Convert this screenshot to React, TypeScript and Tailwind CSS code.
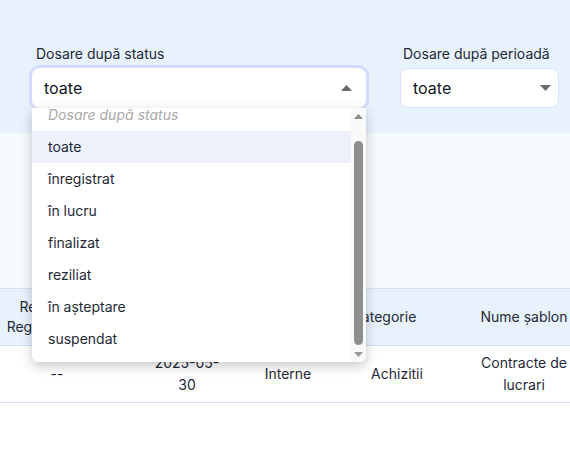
import React from "react";

const options = ["toate", "înregistrat", "în lucru", "finalizat", "reziliat", "în așteptare", "suspendat"];

function Caret({ up, className }: { up?: boolean; className?: string }) {
  return (
    <svg width="11" height="6" viewBox="0 0 11 6" className={className}>
      <path d={up ? "M0 6 L5.5 0 L11 6 Z" : "M0 0 L11 0 L5.5 6 Z"} />
    </svg>
  );
}

function StatusDropdown() {
  return (
    <div className="absolute left-0 top-full z-10 flex h-[254px] w-[334px] overflow-hidden rounded-b-md bg-white shadow-[0_4px_12px_rgba(0,0,0,0.22)]">
      <ul className="-mt-[9px] flex-1">
        <li className="flex h-8 items-center pl-4 text-sm italic text-[#a9a9a9]">Dosare după status</li>
        {options.map((o, i) => (
          <li
            key={o}
            className={`flex h-8 items-center pl-4 text-sm text-[#1f2937] ${i === 0 ? "bg-[#eef1fc]" : ""}`}
          >
            {o}
          </li>
        ))}
      </ul>
      <div className="flex w-[15px] flex-col bg-[#fafafa]">
        <div className="flex h-[15px] items-center justify-center pt-[2px]">
          <Caret up className="h-[5px] w-[9px] fill-[#8a8a8a]" />
        </div>
        <div className="flex-1 px-[3px] pb-[2px] pt-[18px]">
          <div className="h-full rounded-full bg-[#8e8e8e]" />
        </div>
        <div className="flex h-[15px] items-center justify-center">
          <Caret className="h-[5px] w-[9px] fill-[#9a9a9a]" />
        </div>
      </div>
    </div>
  );
}

export default function App() {
  return (
    <div className="min-h-screen overflow-hidden bg-white font-['Inter',sans-serif] text-[#1f2937]">
      <section className="bg-[#e8f2fc] px-8 pb-[25px] pt-[44px]">
        <div className="flex gap-[34px]">
          <div className="relative w-[334px] shrink-0">
            <label className="block pl-1 text-sm leading-5">Dosare după status</label>
            <div className="mt-1 flex h-10 items-center justify-between rounded-lg bg-white pl-3 pr-[14px] text-base text-[#111827] ring-[3px] ring-[#d5dbfa]">
              <span>toate</span>
              <Caret up className="fill-[#6b6b6b]" />
            </div>
            <StatusDropdown />
          </div>
          <div className="w-[159px] shrink-0">
            <label className="block pl-[3px] text-sm leading-5">Dosare după perioadă</label>
            <div className="mt-1 flex h-10 items-center justify-between rounded-lg border border-[#d9e2f7] bg-white pl-3 pr-[7px] text-base text-[#111827]">
              <span>toate</span>
              <Caret className="fill-[#6b6b6b]" />
            </div>
          </div>
        </div>
      </section>

      <div className="h-[155px] bg-[#f5faff]" />

      <div className="text-sm">
        <div className="grid h-[58px] grid-cols-[114px_146px_56px_162px_92px] items-center border-y border-[#d4ddf5] bg-[#e8f2fc] text-center leading-5">
          <div>
            Registru nr.
            <br />
            Registratura nr.
          </div>
          <div>Data creării</div>
          <div>Tip</div>
          <div className="pr-[26px]">Categorie</div>
          <div>Nume șablon</div>
        </div>
        <div className="grid h-[57px] grid-cols-[114px_146px_56px_162px_92px] items-center border-b border-[#d4ddf5] text-center leading-[22px]">
          <div>--</div>
          <div className="mx-auto max-w-[70px]">2025-05-30</div>
          <div>Interne</div>
          <div>Achizitii</div>
          <div>Contracte de lucrari</div>
        </div>
      </div>
    </div>
  );
}
